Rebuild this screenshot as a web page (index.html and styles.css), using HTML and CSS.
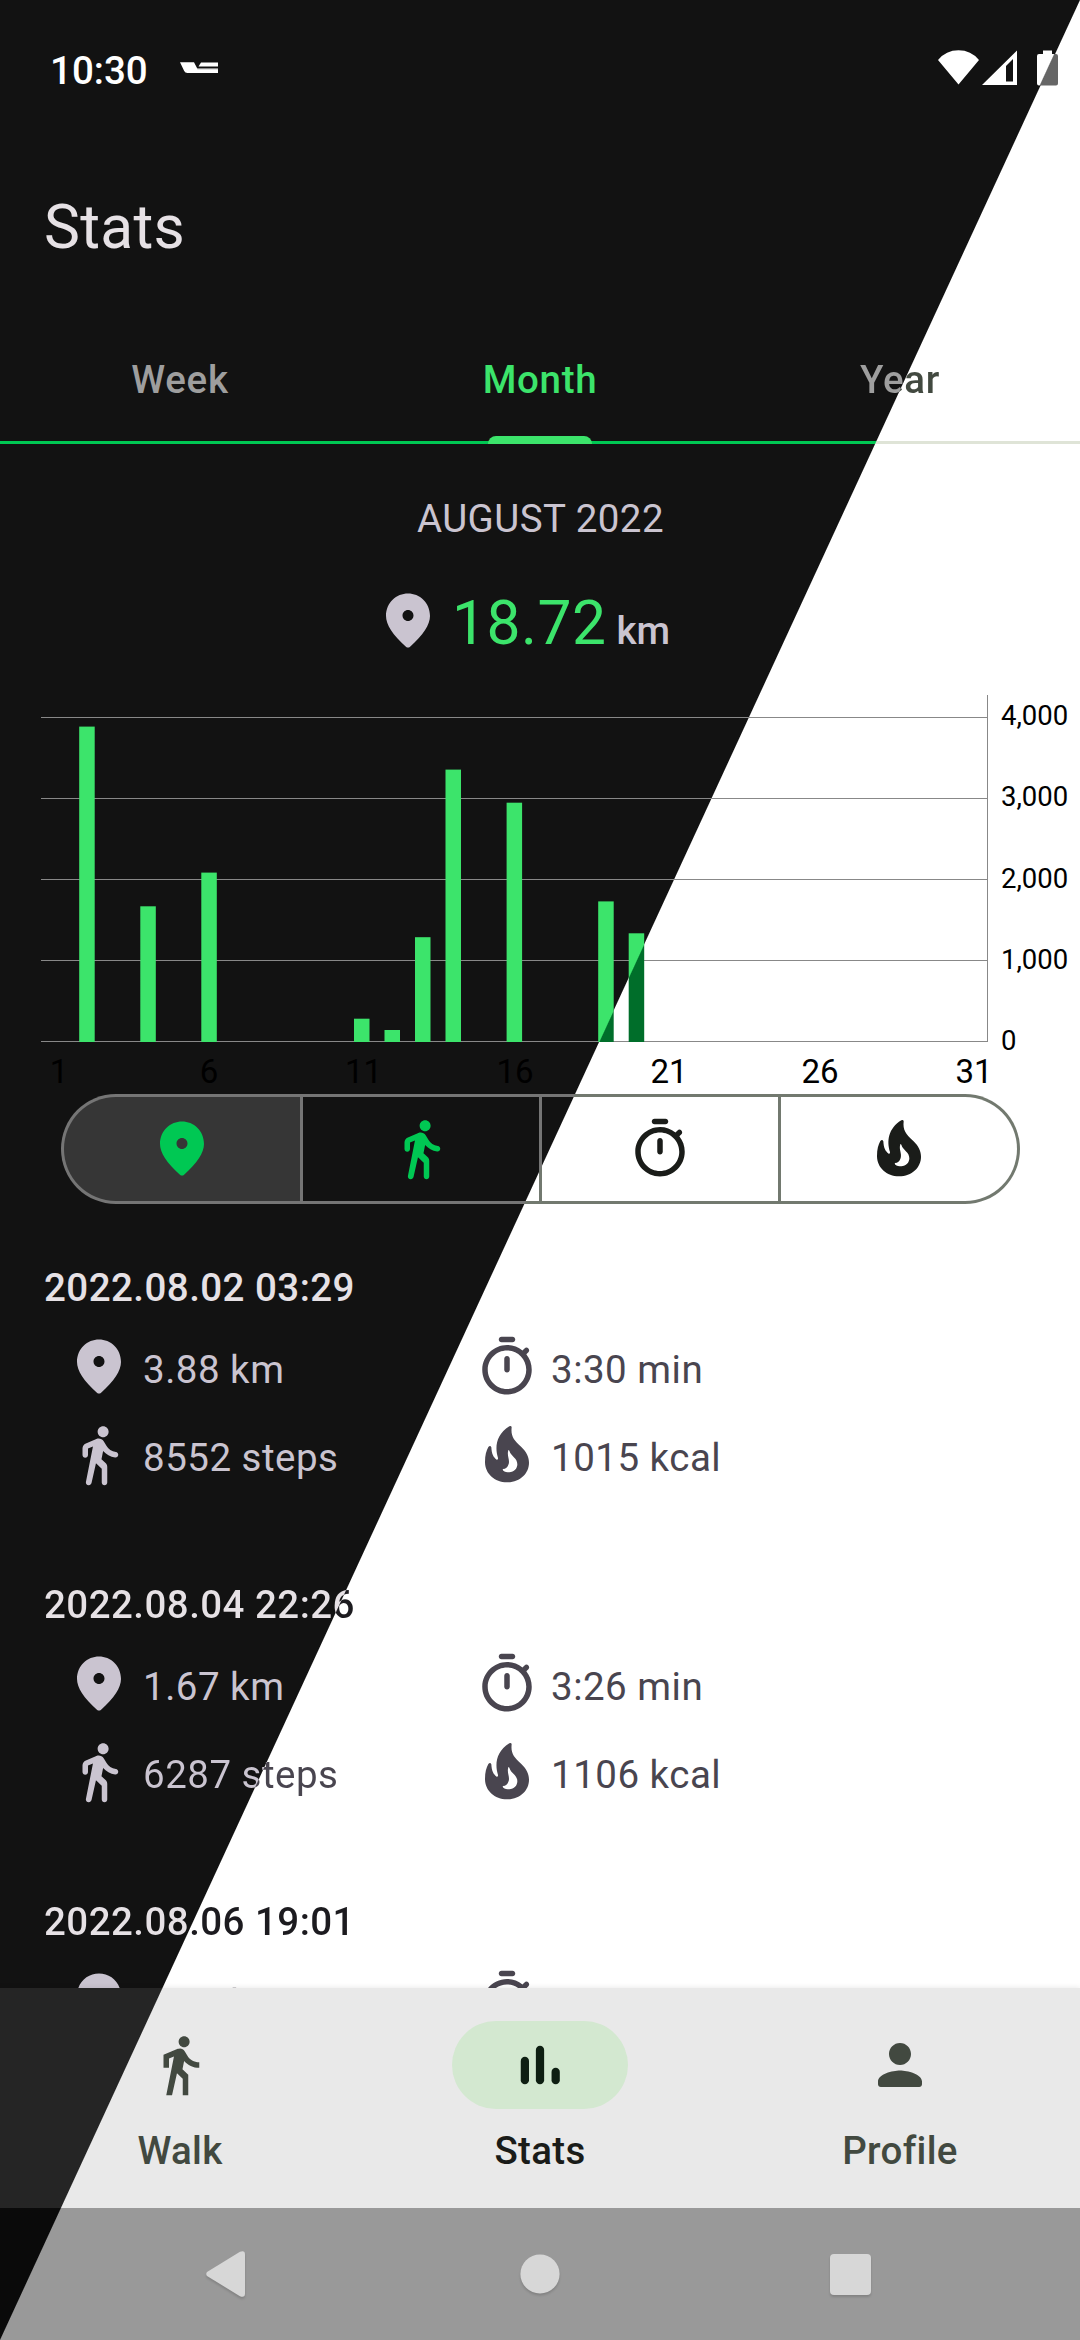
FILE: index.html
```html
<!DOCTYPE html>
<html lang="en">
<head>
<meta charset="utf-8">
<title>Stats</title>
<link rel="stylesheet" href="styles.css">
</head>
<body>
<svg class="defs" width="0" height="0" aria-hidden="true">
  <symbol id="pin" viewBox="0 0 24 24"><path d="M12 2C7.8 2 4 5.22 4 10.2c0 3.18 2.45 6.92 7.34 11.23.38.33.95.33 1.33 0C17.55 17.12 20 13.38 20 10.2 20 5.22 16.2 2 12 2zm0 10c-1.1 0-2-.9-2-2s.9-2 2-2 2 .9 2 2-.9 2-2 2z"/></symbol>
  <symbol id="walk" viewBox="0 0 24 24"><path d="M13.5 5.5c1.1 0 2-.9 2-2s-.9-2-2-2-2 .9-2 2 .9 2 2 2zM9.8 8.9L7.24 21.81c-.13.61.35 1.19.98 1.19h.08c.47 0 .87-.32.98-.78L10.9 15l2.1 2v5c0 .55.45 1 1 1s1-.45 1-1v-5.64c0-.55-.22-1.07-.62-1.45L12.9 13.5l.6-3c1.07 1.24 2.62 2.13 4.36 2.41.6.09 1.14-.39 1.14-1 0-.49-.36-.9-.84-.98-1.53-.25-2.8-1.16-3.46-2.33l-1-1.6c-.56-.89-1.68-1.25-2.66-.84L7.22 7.78C6.48 8.1 6 8.82 6 9.63V12c0 .55.45 1 1 1s1-.45 1-1V9.6l1.8-.7z"/></symbol>
  <symbol id="timer" viewBox="0 0 24 24"><path d="M14 1h-4c-.55 0-1 .45-1 1s.45 1 1 1h4c.55 0 1-.45 1-1s-.45-1-1-1zm-2 13c.55 0 1-.45 1-1V9c0-.55-.45-1-1-1s-1 .45-1 1v4c0 .55.45 1 1 1zm7.03-6.61l.75-.75c.38-.38.39-1.01 0-1.4l-.01-.01c-.39-.39-1.01-.38-1.4 0l-.75.75C16.07 4.74 14.12 4 12 4c-4.8 0-8.88 3.96-9 8.76C2.87 17.84 6.94 22 12 22c4.98 0 9-4.03 9-9 0-2.12-.74-4.07-1.97-5.61zM12 20c-3.87 0-7-3.13-7-7s3.13-7 7-7 7 3.13 7 7-3.13 7-7 7z"/></symbol>
  <symbol id="fire" viewBox="0 12 198 198"><path fill-rule="evenodd" d="M106 25Q112 22 113 28C110 54 119 67 142 87C158 102 165 118 165 134C165 166 138 193 99 193C62 193 33 167 33 132C33 112 37 98 43 87Q49 81 52 88C53 108 58 118 68 125Q73 126 72 120C62 88 66 50 106 25ZM103 97C98 113 108 124 104 138C101 148 95 153 87 153Q85 155 88 158C92 162 99 163 106 163C120 163 130 152 130 139C130 119 112 117 106 98Q104 95 103 97Z"/></symbol>
</svg>

<div class="page">
  <header class="status">
    <span class="clock">10:30</span>
    <svg class="notice" width="38" height="12" viewBox="0 0 38 12"><path fill="#fff" d="M0 .3H14L17 6H38V11H7.500Q5 11 4.200 9zM21 .5H38V4.600H18.500z"/><path fill="#888" d="M17 6H38V7.200H17.500z"/></svg>
    <svg class="signals" width="121" height="37" viewBox="0 0 121 37">
      <defs><linearGradient id="batt" gradientUnits="userSpaceOnUse" x1="108" y1="20.400" x2="109" y2="20.860"><stop offset="0" stop-color="#fff"/><stop offset="1" stop-color="#666"/></linearGradient></defs>
      <path fill="#fff" d="M0 10Q8 .3 20.500.3T41 10L20.500 34.500zM44 35L79 .5V35z"/>
      <path fill="#121212" d="M68 16L75 9V31.500H68z"/>
      <path fill="url(#batt)" d="M105 .5H114V4H118Q120 4 120 6V33.500Q120 35.500 118 35.500H101Q99 35.500 99 33.500V6Q99 4 101 4H105z"/>
    </svg>
  </header>

  <h1 class="title">Stats</h1>

  <nav class="tabs">
    <span class="tab">Week</span>
    <span class="tab tab-on">Month</span>
    <span class="tab"><span class="split split-tab">Year</span></span>
  </nav>

  <p class="period">AUGUST 2022</p>
  <div class="total">
    <svg class="icon"><use href="#pin"/></svg>
    <p class="amount"><span class="value">18.72</span><span class="unit">km</span></p>
  </div>

  <svg class="chart" width="1080" height="440" viewBox="0 654 1080 440">
    <defs><linearGradient id="barfill" gradientUnits="userSpaceOnUse" x1="599" y1="1041.500" x2="600" y2="1041.960"><stop offset="0" stop-color="#3ce46b"/><stop offset="1" stop-color="#006e2a"/></linearGradient></defs>
    <path class="rule" d="M41 717.500H988M41 798.500H988M41 879.500H988M41 960.500H988M41 1041.500H988M987.500 695V1042"/>
    <g fill="url(#barfill)">
      <rect x="79.200" y="726.600" width="15.500" height="315.400"/>
      <rect x="140.300" y="906.300" width="15.500" height="135.700"/>
      <rect x="201.300" y="872.600" width="15.500" height="169.400"/>
      <rect x="354" y="1018.700" width="15.500" height="23.300"/>
      <rect x="384.500" y="1030" width="15.500" height="12"/>
      <rect x="415" y="937.200" width="15.500" height="104.800"/>
      <rect x="445.500" y="769.600" width="15.500" height="272.400"/>
      <rect x="506.600" y="802.700" width="15.500" height="239.300"/>
      <rect x="598.200" y="901.400" width="15.500" height="140.600"/>
      <rect x="628.700" y="933.300" width="15.500" height="108.700"/>
    </g>
    <g class="days">
      <text x="59" y="1083">1</text><text x="209" y="1083">6</text><text x="363.500" y="1083">11</text><text x="515" y="1083">16</text><text x="669" y="1083">21</text><text x="820" y="1083">26</text><text x="974" y="1083">31</text>
    </g>
    <g class="metres">
      <text x="1001" y="725">4,000</text><text x="1001" y="806">3,000</text><text x="1001" y="888">2,000</text><text x="1001" y="969">1,000</text><text x="1001" y="1050">0</text>
    </g>
  </svg>

  <div class="segments">
    <span class="segment segment-on"><svg class="icon"><use href="#pin"/></svg></span>
    <span class="segment"><svg class="icon green"><use href="#walk"/></svg></span>
    <span class="segment"><svg class="icon"><use href="#timer"/></svg></span>
    <span class="segment"><svg class="icon"><use href="#fire"/></svg></span>
  </div>

  <main class="list">
    <article class="entry">
      <h2 class="date">2022.08.02 03:29</h2>
      <div class="facts">
        <span class="fact"><svg class="icon"><use href="#pin"/></svg><span>3.88 km</span></span>
        <span class="fact fact-light"><svg class="icon"><use href="#timer"/></svg><span>3:30 min</span></span>
        <span class="fact"><svg class="icon"><use href="#walk"/></svg><span>8552 steps</span></span>
        <span class="fact fact-light"><svg class="icon"><use href="#fire"/></svg><span>1015 kcal</span></span>
      </div>
    </article>
    <article class="entry">
      <h2 class="date"><span class="split split-date">2022.08.04 22:26</span></h2>
      <div class="facts">
        <span class="fact"><svg class="icon"><use href="#pin"/></svg><span>1.67 km</span></span>
        <span class="fact fact-light"><svg class="icon"><use href="#timer"/></svg><span>3:26 min</span></span>
        <span class="fact"><svg class="icon"><use href="#walk"/></svg><span class="split split-fact">6287 steps</span></span>
        <span class="fact fact-light"><svg class="icon"><use href="#fire"/></svg><span>1106 kcal</span></span>
      </div>
    </article>
    <article class="entry">
      <h2 class="date"><span class="split split-date">2022.08.06 19:01</span></h2>
      <div class="facts">
        <span class="fact"><svg class="icon"><use href="#pin"/></svg><span class="split split-fact">2.08 km</span></span>
        <span class="fact fact-light"><svg class="icon"><use href="#timer"/></svg></span>
      </div>
    </article>
  </main>

  <nav class="bottom">
    <span class="dest"><span class="pill"><svg class="icon" viewBox="0 0 24 24"><path d="M13.500 5.500c1.100 0 2-.9 2-2s-.9-2-2-2-2 .9-2 2 .9 2 2 2zM9.800 8.900L7 23h2.100l1.800-8 2.100 2v6h2v-7.500l-2.100-2 .6-3C14.800 12 16.800 13 19 13v-2c-1.900 0-3.500-1-4.300-2.400l-1-1.600c-.4-.6-1-1-1.700-1-.3 0-.5.1-.8.1L6 8.300V13h2V9.600l1.800-.7"/></svg></span>Walk</span>
    <span class="dest dest-on"><span class="pill"><svg class="icon" viewBox="0 0 24 24"><rect x="5" y="9" width="3" height="10" rx="1.500"/><rect x="10.500" y="5" width="3" height="14" rx="1.500"/><rect x="16.200" y="13" width="3" height="6" rx="1.500"/></svg></span>Stats</span>
    <span class="dest"><span class="pill"><svg class="icon" viewBox="0 0 24 24"><path d="M12 12c2.210 0 4-1.790 4-4s-1.790-4-4-4-4 1.790-4 4 1.790 4 4 4zm0 2c-2.670 0-8 1.340-8 4v1c0 .55.45 1 1 1h14c.55 0 1-.45 1-1v-1c0-2.660-5.330-4-8-4z"/></svg></span>Profile</span>
  </nav>

  <footer class="system">
    <svg class="key" width="40" height="46" viewBox="0 0 40 46"><path d="M1 21Q-.5 23 1 25L34 45.200Q39 47 39 42.500V3.500Q39-1 34 .8z"/></svg>
    <svg class="key key-home" width="40" height="40" viewBox="0 0 40 40"><circle cx="20" cy="20" r="19.600"/></svg>
    <svg class="key key-recent" width="41" height="41" viewBox="0 0 41 41"><rect width="41" height="41" rx="4"/></svg>
  </footer>
</div>
</body>
</html>
```
FILE: styles.css
```css
:root {
  --from: calc(50% - .5px);
  --to: calc(50% + .5px);
}

* { box-sizing: border-box; margin: 0; padding: 0; }

body {
  width: 1080px;
  height: 2340px;
  overflow: hidden;
  font-family: Roboto, sans-serif;
  font-size: 38.5px;
  font-weight: 400;
}

.defs { position: absolute; }

.page {
  display: flex;
  flex-direction: column;
  width: 1080px;
  height: 2340px;
  background: linear-gradient(to bottom right, #121212 var(--from), #fff var(--to)) fixed;
  color: #cac4d0;
}

.icon { display: block; flex: none; width: 66px; height: 66px; fill: currentColor; }

/* Text that runs across the border of the two themes */
.split {
  -webkit-background-clip: text;
  background-clip: text;
  background-attachment: fixed;
  color: transparent;
}
.split-tab { background-image: linear-gradient(to bottom right, #9e9e9e var(--from), #424940 var(--to)); }
.split-date { background-image: linear-gradient(to bottom right, #e6e1e5 var(--from), #1c1b1f var(--to)); }
.split-fact { background-image: linear-gradient(to bottom right, #cac4d0 var(--from), #49454f var(--to)); }

.status { display: flex; align-items: center; flex: none; height: 140px; padding: 0 21px 0 50px; color: #fff; }
.clock { font-size: 38.5px; font-weight: 500; }
.notice { margin: -4px auto 0 32px; }
.signals { margin-top: -4px; }

.title { flex: none; height: 175px; padding-left: 44px; font-size: 60.5px; font-weight: 400; line-height: 175px; letter-spacing: .3px; color: #e6e1e5; }

.tabs {
  display: grid;
  grid-template-columns: repeat(3, 1fr);
  flex: none;
  height: 129px;
  background: linear-gradient(to bottom right, #00c853 var(--from), #dfe4d7 var(--to)) fixed;
  padding-bottom: 3px;
}
.tab {
  display: flex;
  align-items: center;
  justify-content: center;
  padding-top: 3px;
  background: linear-gradient(to bottom right, #121212 var(--from), #fff var(--to)) fixed;
  font-weight: 500;
  letter-spacing: .7px;
  color: #9e9e9e;
}
.tab-on { position: relative; color: #3ce46b; }
.tab-on::after {
  content: "";
  position: absolute;
  left: 128px;
  bottom: -3px;
  width: 104px;
  height: 8px;
  border-radius: 8px 8px 0 0;
  background: #3ce46b;
}

.period { flex: none; padding: 48px 0 0 1px; height: 102px; line-height: 54px; text-align: center; letter-spacing: .45px; }

.total { display: flex; flex: none; height: 66px; margin-top: 42px; padding-left: 375px; }
.amount { display: flex; align-items: baseline; gap: 10px; margin-left: 11px; line-height: 72px; }
.value { font-size: 60.5px; letter-spacing: .5px; color: #3ce46b; }
.unit { font-weight: 500; }

.chart { display: block; flex: none; }
.rule { fill: none; stroke: #888; stroke-width: 1; }
.days { font-size: 33px; text-anchor: middle; fill: #000; }
.metres { font-size: 27.5px; fill: #000; }

.segments {
  display: grid;
  grid-template-columns: repeat(4, 236px);
  gap: 3px;
  flex: none;
  width: 959px;
  height: 110px;
  margin-left: 61px;
  padding: 3px;
  border-radius: 55px;
  background: linear-gradient(to bottom right, #757575 var(--from), #72796f var(--to)) fixed;
}
.segment {
  display: flex;
  align-items: center;
  justify-content: center;
  background: linear-gradient(to bottom right, #121212 var(--from), #fff var(--to)) fixed;
  color: #1a1c19;
}
.segment:first-child { border-radius: 52px 0 0 52px; }
.segment:last-child { border-radius: 0 52px 52px 0; }
.segment-on { background: #363636; color: #00c853; }
.green { color: #00c853; }

.list { display: flex; flex-direction: column; gap: 95px; flex: 1; min-height: 0; padding-top: 62px; overflow: hidden; }
.entry { flex: none; }
.date { height: 44px; padding-left: 44px; line-height: 44px; font-size: 38.5px; font-weight: 500; letter-spacing: .45px; color: #e6e1e5; }
.facts { display: grid; grid-template-columns: 408px 1fr; row-gap: 22px; margin-top: 24px; padding-left: 66px; }
.fact { display: flex; gap: 11px; height: 66px; line-height: 71px; letter-spacing: .5px; }
.fact-light { color: #49454f; }

.bottom {
  display: grid;
  grid-template-columns: repeat(3, 1fr);
  flex: none;
  height: 220px;
  background: linear-gradient(to bottom right, #252525 var(--from), #e9e9e9 var(--to)) fixed;
  box-shadow: 0 -1px 5px rgba(0, 0, 0, .08);
  color: #424940;
}
.dest { display: flex; flex-direction: column; align-items: center; padding-top: 33px; line-height: 44px; font-weight: 500; letter-spacing: .3px; }
.pill { display: flex; align-items: center; justify-content: center; width: 176px; height: 88px; margin-bottom: 20px; border-radius: 44px; }
.dest-on { color: #1a1c19; }
.dest-on .pill { background: #d3e8d0; color: #0e1f12; }

.system {
  display: flex;
  align-items: center;
  flex: none;
  height: 132px;
  padding-left: 206px;
  background: linear-gradient(to bottom right, #0a0a0a var(--from), #999 var(--to)) fixed;
}
.key { fill: #d7d7d7; overflow: visible; filter: drop-shadow(0 2px 1px rgba(0, 0, 0, .15)); }
.key-home { margin-left: 274px; }
.key-recent { margin-left: 270px; }
```
